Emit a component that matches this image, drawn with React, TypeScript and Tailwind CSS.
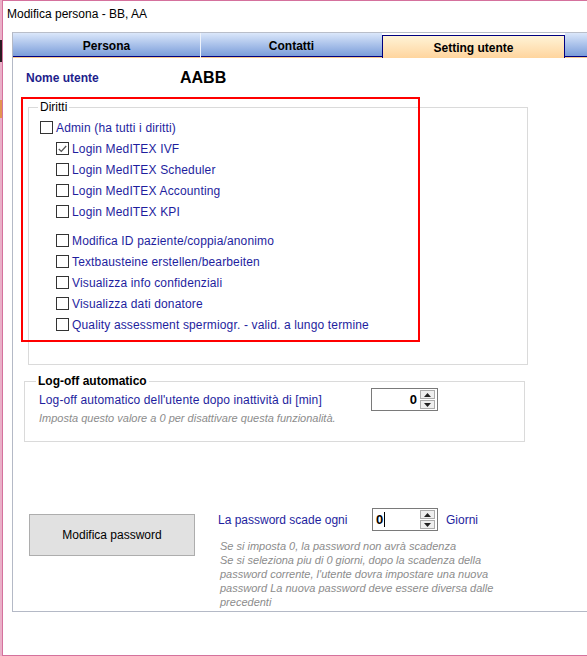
import type { ReactNode } from 'react';

type Perm = { label: string; checked?: boolean; indent?: boolean; gapBefore?: boolean };

const permissions: Perm[] = [
  { label: 'Admin (ha tutti i diritti)' },
  { label: 'Login MedITEX IVF', checked: true, indent: true },
  { label: 'Login MedITEX Scheduler', indent: true },
  { label: 'Login MedITEX Accounting', indent: true },
  { label: 'Login MedITEX KPI', indent: true },
  { label: 'Modifica ID paziente/coppia/anonimo', indent: true, gapBefore: true },
  { label: 'Textbausteine erstellen/bearbeiten', indent: true },
  { label: 'Visualizza info confidenziali', indent: true },
  { label: 'Visualizza dati donatore', indent: true },
  { label: 'Quality assessment spermiogr. - valid. a lungo termine', indent: true },
];

const passwordHint = [
  'Se si imposta 0, la password non avrà scadenza',
  'Se si seleziona piu di 0 giorni, dopo la scadenza della',
  "password corrente, l'utente dovra impostare una nuova",
  'password La nuova password deve essere diversa dalle',
  'precedenti',
];

function CheckBox({ checked }: { checked?: boolean }) {
  return (
    <span className="flex h-[13px] w-[13px] shrink-0 items-center justify-center border border-[#333333] bg-white">
      {checked && (
        <svg width="9" height="8" viewBox="0 0 9 8">
          <path d="M0.8 4 L3.3 6.4 L8.2 1" fill="none" stroke="#555555" strokeWidth="1.3" />
        </svg>
      )}
    </span>
  );
}

function SpinButtons() {
  return (
    <div className="flex w-[15px] flex-col gap-[1px]">
      <div className="flex h-[9px] items-center justify-center border border-[#acacac] bg-[#efefef]">
        <svg width="7" height="4" viewBox="0 0 7 4">
          <path d="M3.5 0 L7 4 L0 4 Z" fill="#222222" />
        </svg>
      </div>
      <div className="flex h-[9px] items-center justify-center border border-[#acacac] bg-[#efefef]">
        <svg width="7" height="4" viewBox="0 0 7 4">
          <path d="M0 0 L7 0 L3.5 4 Z" fill="#222222" />
        </svg>
      </div>
    </div>
  );
}

function Tab({ children, width, selected }: { children: ReactNode; width: string; selected?: boolean }) {
  if (selected) {
    return (
      <div
        className={`${width} mt-[2px] flex items-center justify-center border border-b-0 border-[#000080] bg-gradient-to-b from-[#fff3d6] to-[#ffd59e] pt-[2px] text-[12px] font-bold text-black`}
      >
        {children}
      </div>
    );
  }
  return (
    <div className={`${width} flex flex-col`}>
      <div className="flex flex-1 items-center justify-center border-b border-[#000080] bg-gradient-to-b from-[#dbe7fa] to-[#7b9dd9] pt-[3px] text-[12px] font-bold text-black">
        {children}
      </div>
      <div className="h-[1px] bg-[#f6c98e]" />
    </div>
  );
}

export default function App() {
  return (
    <div className="flex h-[656px] w-[587px] overflow-hidden bg-white font-['Liberation_Sans',Arial,sans-serif]">
      {/* strip of desktop showing beside the window edge */}
      <div className="flex w-[2px] flex-col bg-[#eab0c8]">
        <div className="mt-[40px] h-[22px] bg-[#2a1c22]" />
        <div className="mt-[38px] h-[18px] bg-[#e49450]" />
      </div>

      <div className="flex flex-1 flex-col border-y border-l border-[#d5719d]">
        <div className="flex h-[31px] items-center pb-[5px] pl-[4px] text-[12px] text-black">
          Modifica persona - BB, AA
        </div>

        <div className="relative ml-[9px] flex h-[580px] flex-col border-b border-l border-[#b4b9c6]">
          <div className="flex h-[26px] border-t border-[#b9bec9]">
            <Tab width="w-[187px]">Persona</Tab>
            <div className="w-[1px] bg-[#eef3fb]" />
            <Tab width="w-[181px]">Contatti</Tab>
            <Tab width="w-[183px]" selected>
              Setting utente
            </Tab>
            <Tab width="flex-1"> </Tab>
          </div>

          <div className="mt-[12px] flex h-[16px] items-center pl-[13px]">
            <span className="w-[154px] text-[12px] font-bold text-[#1e1e8c]">Nome utente</span>
            <span className="text-[16px] font-bold text-black">AABB</span>
          </div>

          <fieldset className="ml-[15px] mt-[14px] w-[500px] border border-[#dadada] pb-[29px]">
            <legend className="ml-[9px] px-[2px] text-[12px] leading-[14px] text-black">Diritti</legend>
            <div className="mt-[3px] flex flex-col">
              {permissions.map((p) => (
                <label
                  key={p.label}
                  className={`flex h-[21px] items-center gap-[3px] text-[12px] tracking-[0.15px] text-[#1e1e9e] ${
                    p.indent ? 'pl-[27px]' : 'pl-[11px]'
                  } ${p.gapBefore ? 'mt-[8px]' : ''}`}
                >
                  <CheckBox checked={p.checked} />
                  {p.label}
                </label>
              ))}
            </div>
          </fieldset>

          <fieldset className="ml-[11px] mt-[9px] w-[501px] border border-[#dadada] pb-[16px]">
            <legend className="ml-[11px] px-[2px] text-[12px] font-bold leading-[14px] text-black">
              Log-off automatico
            </legend>
            <div className="flex items-center pl-[14px]">
              <span className="w-[332px] text-[12px] tracking-[0.12px] text-[#1e1e9e]">
                Log-off automatico dell'utente dopo inattività di [min]
              </span>
              <div className="flex h-[23px] w-[67px] items-center justify-end gap-[3px] border border-[#7a7a7a] bg-white pr-[2px]">
                <span className="text-[13px] font-bold text-black">0</span>
                <SpinButtons />
              </div>
            </div>
            <div className="pl-[14px] text-[11px] italic leading-[14px] text-[#8c8c8c]">
              Imposta questo valore a 0 per disattivare questa funzionalità.
            </div>
          </fieldset>

          <div className="mt-[66px] flex">
            <button className="ml-[16px] mt-[6px] h-[42px] w-[166px] border border-[#adadad] bg-[#e1e1e1] text-[12px] text-black">
              Modifica password
            </button>
            <div className="ml-[23px] flex flex-col">
              <div className="flex items-center">
                <span className="w-[154px] text-[12px] text-[#1e1e9e]">La password scade ogni</span>
                <div className="flex h-[23px] w-[66px] items-center justify-between border border-[#7a7a7a] bg-white pl-[3px] pr-[2px]">
                  <span className="flex items-center text-[13px] font-bold text-black">
                    0<span className="ml-[1px] h-[15px] w-[1px] bg-black" />
                  </span>
                  <SpinButtons />
                </div>
                <span className="ml-[8px] text-[12px] text-[#1e1e9e]">Giorni</span>
              </div>
              <div className="mt-[8px] pl-[2px] text-[11px] italic leading-[14px] text-[#8c8c8c]">
                {passwordHint.map((line) => (
                  <div key={line}>{line}</div>
                ))}
              </div>
            </div>
          </div>

          {/* red highlight frame around the rights group */}
          <div className="pointer-events-none absolute left-[8px] top-[65px] h-[245px] w-[399px] border-2 border-[#ff0000]" />
        </div>
      </div>
    </div>
  );
}
